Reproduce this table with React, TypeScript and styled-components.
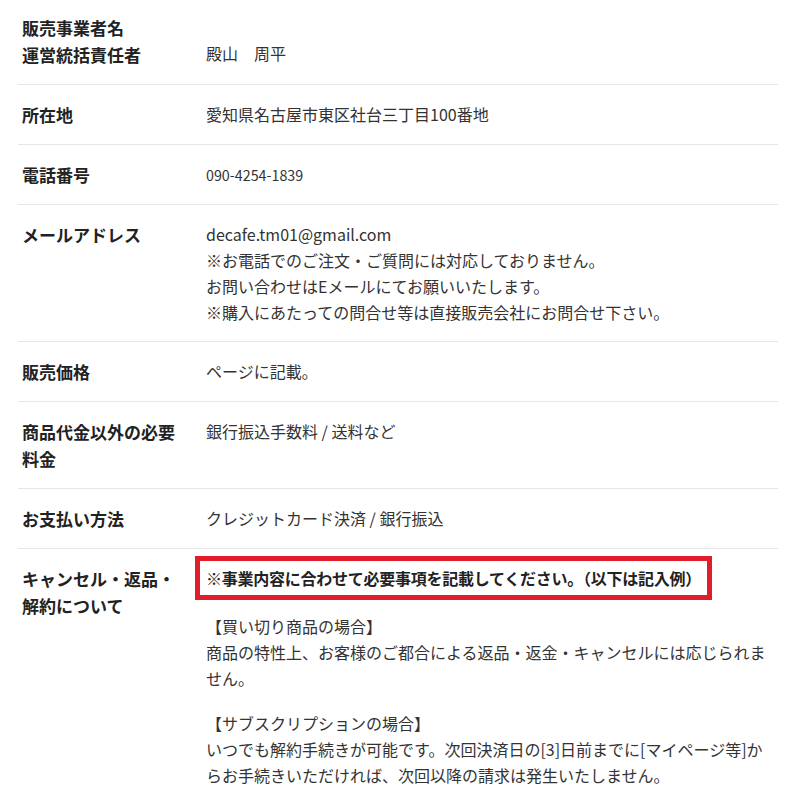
import React from "react";
import styled, { createGlobalStyle } from "styled-components";

const GlobalStyle = createGlobalStyle`
  html, body {
    margin: 0;
    padding: 0;
    background: #ffffff;
  }
  body {
    font-family: "Noto Sans CJK JP", "Noto Sans", sans-serif;
    color: #333333;
    overflow: hidden;
  }
`;

const Page = styled.div`
  padding: 0 19px 0 18px;
  margin-top: -2px;
`;

const Table = styled.dl`
  margin: 0;
  display: flex;
  flex-direction: column;
`;

const Row = styled.div`
  display: grid;
  grid-template-columns: 188px 1fr;
  border-bottom: 1px solid #e6e6e6;
  padding: 16px 0;
`;

const Label = styled.dt`
  margin: 0;
  padding: 0 24px 0 4px;
  font-size: 17px;
  line-height: 27px;
  font-weight: 700;
  color: #222222;
`;

const Value = styled.dd`
  margin: 0;
  padding: 0 8px 0 0;
  font-size: 16px;
  line-height: 26px;
  color: #333333;
`;

const Small = styled.span`
  font-size: 14.3px;
`;

const Para = styled.p<{ $gap?: number }>`
  margin: 0 0 ${(p) => (p.$gap ?? 19)}px;
  &:last-child {
    margin-bottom: 0;
  }
`;

const Notice = styled.span`
  font-weight: 700;
  color: #222222;
  border: 5px solid #e11d2b;
  padding: 5px 6px;
  margin-left: -11px;
  letter-spacing: -0.25px;
`;

export default function App() {
  return (
    <>
      <GlobalStyle />
      <Page>
        <Table>
          <Row>
            <Label>
              販売事業者名
              <br />
              運営統括責任者
            </Label>
            <Value>
              <br />
              殿山　周平
            </Value>
          </Row>
          <Row>
            <Label>所在地</Label>
            <Value>愛知県名古屋市東区社台三丁目100番地</Value>
          </Row>
          <Row>
            <Label>電話番号</Label>
            <Value>
              <Small>090-4254-1839</Small>
            </Value>
          </Row>
          <Row>
            <Label>メールアドレス</Label>
            <Value>
              decafe.tm01@gmail.com
              <br />
              ※お電話でのご注文・ご質問には対応しておりません。
              <br />
              お問い合わせはEメールにてお願いいたします。
              <br />
              ※購入にあたっての問合せ等は直接販売会社にお問合せ下さい。
            </Value>
          </Row>
          <Row>
            <Label>販売価格</Label>
            <Value>ページに記載。</Value>
          </Row>
          <Row>
            <Label>商品代金以外の必要料金</Label>
            <Value>銀行振込手数料 / 送料など</Value>
          </Row>
          <Row>
            <Label>お支払い方法</Label>
            <Value>クレジットカード決済 / 銀行振込</Value>
          </Row>
          <Row>
            <Label>キャンセル・返品・解約について</Label>
            <Value>
              <Para $gap={22}>
                <Notice>※事業内容に合わせて必要事項を記載してください。（以下は記入例）</Notice>
              </Para>
              <Para>
                【買い切り商品の場合】
                <br />
                商品の特性上、お客様のご都合による返品・返金・キャンセルには応じられません。
              </Para>
              <Para>
                【サブスクリプションの場合】
                <br />
                いつでも解約手続きが可能です。次回決済日の[3]日前までに[マイページ等]からお手続きいただければ、次回以降の請求は発生いたしません。
              </Para>
            </Value>
          </Row>
        </Table>
      </Page>
    </>
  );
}
